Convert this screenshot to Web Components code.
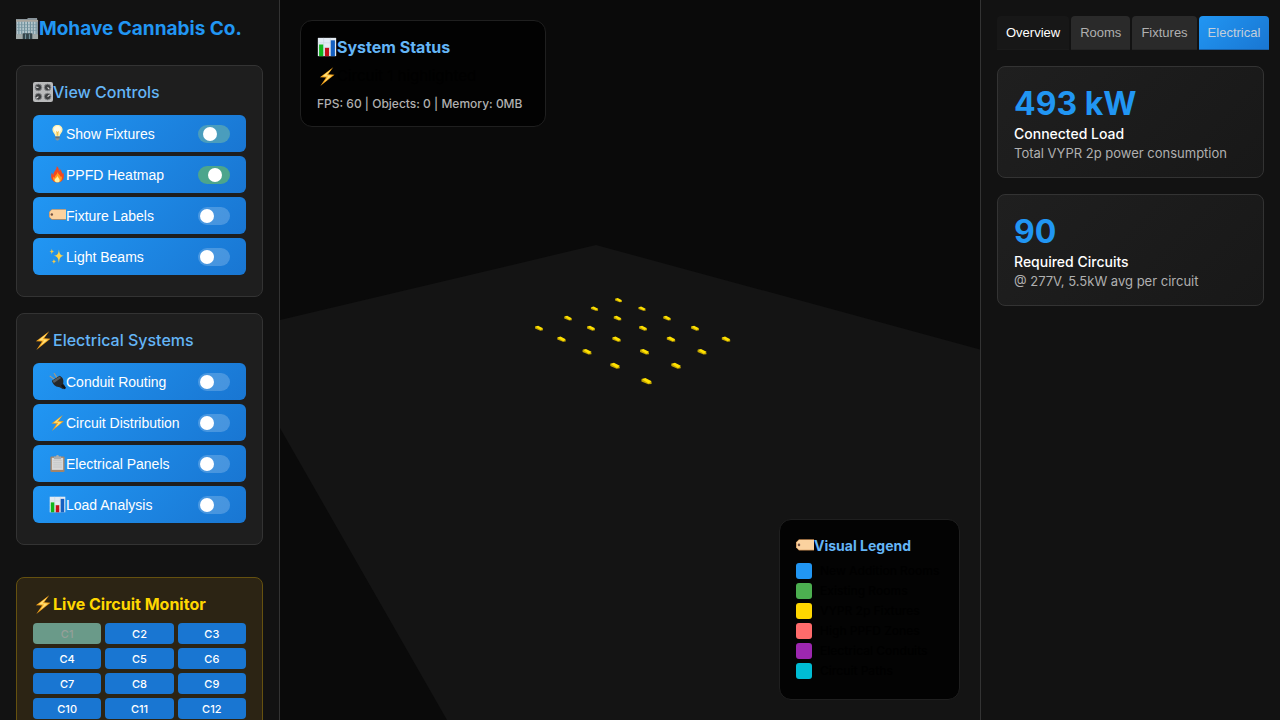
<!DOCTYPE html>
<html lang="en">
<head>
<meta charset="utf-8">
<title>Mohave Cannabis Co.</title>
<style>
  body { margin: 0; background: #0a0a0a; color: #000; font-family: Inter, "Liberation Sans", sans-serif; }
</style>
</head>
<body>
<facility-app></facility-app>
<script>
const define = (name, html, setup) => {
  const template = document.createElement('template');
  template.innerHTML = html;
  customElements.define(name, class extends HTMLElement {
    connectedCallback() {
      if (this.shadowRoot) return;
      const root = this.attachShadow({ mode: 'open' });
      root.append(template.content.cloneNode(true));
      if (setup) setup(this, root);
    }
  });
};

const bolt = '<path d="M19.500 1.500 3.500 13.400l7.400.4L4 24 21 10.400l-7.600-.5z" fill="#f7a51b"/><path d="M17.400 3.600 6.600 12.200l6.600.3-4.600 7L18 11.400l-6.800-.3z" fill="#ffe27a"/>';
const ICONS = {
  building: '<path d="M0 2h12V1h10v3h1v19H0z" fill="#87939a"/><path d="M0 3h23v2H0z" fill="#a9a59c"/><path d="M1 5h21v13H1z" fill="#b5c6cc"/><path d="M3 5v13M6 5v13M9 5v13M12 5v13M15 5v13M18 5v13M21 5v13" stroke="#668a98" stroke-width="1"/><path d="M1 8h21M1 11h21M1 14h21" stroke="#76949f" stroke-width=".7"/><path d="M0 18h23v5H0z" fill="#a1aaa9"/><path d="M7 17h10v6H7z" fill="#34454b"/><path d="M10 18v5M14 18v5" stroke="#7b9aa4"/>',
  knobs: '<rect width="24" height="24" rx="2.500" fill="#b9babb"/><g fill="#3d3f41" stroke="#8c8e90"><circle cx="6.500" cy="6.500" r="4"/><circle cx="17.500" cy="6.500" r="4"/><circle cx="6.500" cy="17.500" r="4"/><circle cx="17.500" cy="17.500" r="4"/></g><path d="M6.500 6.500 3.500 6M17.500 6.500l2 2M6.500 17.500l-2.500 2M17.500 17.500l2.500-2" stroke="#e4e4e4" stroke-width="1.300"/>',
  bulb: '<path d="M12 0c-4.500 0-7.200 3-7.200 6.800 0 4 3.600 5.500 4.200 9.200h6c.6-3.700 4.200-5.200 4.200-9.200C19.200 3 16.500 0 12 0z" fill="#fff0b0"/><path d="M12 1.500c-3 0-5 2-5 5 0 2 1.500 3 2.500 5l2.500 3 2.500-3c1-2 2.500-3 2.500-5 0-3-2-5-5-5z" fill="#fffce9"/><path d="M10 8l2 2 2-2-1 7h-2z" fill="#f5c34d"/><path d="M9 16h6v4l-2 2h-2l-2-2z" fill="#899398"/><path d="M9 18h6" stroke="#46535b"/>',
  fire: '<path d="M11 0c3 3 3 5 3 8 1-1 1.500-2 1-4 4 4 3 6 4 7l1-2c3 8-1 14-8 14S1 17 4 9l2 4C6 8 11 6 11 0z" fill="#f4491f"/><path d="M12 8c1 4 4 5 5 8l1-2c1 6-2 9-6 9s-7-3-6-8l2 2c0-4 4-5 4-9z" fill="#ff9c21"/><path d="M12 14c1 3 3 3 3 6 0 2-1 3-3 3s-4-1-4-3c0-3 3-3 4-6z" fill="#fff0a0"/>',
  tag: '<path d="M4 3h20v15H4l-4-4V7z" fill="#c98e55"/><path d="M4 4h20v13H4l-3-3V7z" fill="#fbd29f"/><circle cx="4" cy="10.500" r="1.700" fill="#765241"/>',
  sparkles: '<path d="M14 2c1 7 2 8 7 9-5 1-6 3-7 10-1-7-2-9-7-10 5-1 6-2 7-9z" fill="#ffd54a"/><path d="M4 1c.5 3 1 3.500 3.500 4C5 5.500 4.500 6 4 9 3.500 6 3 5.500.5 5 3 4.500 3.500 4 4 1zM7 15c.4 3 1 3.500 3.500 4C8 19.500 7.400 20 7 23c-.4-3-1-3.500-3.500-4C6 18.500 6.600 18 7 15z" fill="#f5ca48"/>',
  bolt,
  plug: '<path d="M1 4l8 6M7 0l5 8" stroke="#a59a83" stroke-width="1.600"/><path d="M4 11 15 4c5 2 6 7 5 11l3 4-3 4-5-3c-4 0-9-2-11-9z" fill="#25282a"/><path d="M5 11 15 5l2 2-10 7z" fill="#565c60"/><path d="M18 17l5 5" stroke="#111" stroke-width="3"/>',
  clipboard: '<rect x="2" y="2" width="20" height="22" rx="1.500" fill="#a2846a"/><path d="M4 4h16v17H4z" fill="#d8d9d9"/><path d="M6 8h12M6 11h12M6 14h12M6 17h12" stroke="#bcbfc0"/><path d="M7 2h3a2 2 0 0 1 4 0h3v4H7z" fill="#a9adb0"/>',
  chart: '<path d="M1 1h22v22H1z" fill="#e3ebf3"/><path d="M1 7h22M1 13h22M1 19h22M8 1v22M16 1v22" stroke="#c3d0dc" stroke-width=".6"/><path d="M2.500 9h5v14h-5z" fill="#10b51b"/><path d="M9.500 13h5v10h-5z" fill="#c30e18"/><path d="M16.500 4h5v19h-5z" fill="#145fc1"/>'
};
define('emoji-icon', `<style>
  :host { display: block; flex: none; width: 20px; height: 20px; }
  svg { display: block; width: 100%; height: 100%; }
</style><svg viewBox="0 0 24 24" fill="none" aria-hidden="true"></svg>`,
(el, root) => { root.querySelector('svg').innerHTML = ICONS[el.getAttribute('name')]; });

define('toggle-button', `<style>
  :host { display: block; }
  button { display: flex; align-items: center; width: 100%; height: 37px; padding: 0 16px; border: 0; border-radius: 6px;
    background: linear-gradient(135deg, #2196f3, #1976d2); color: #fff; font: 500 14px/16px "Liberation Sans", Arial, sans-serif; cursor: pointer; }
  emoji-icon { width: 17px; height: 17px; }
  .switch { display: flex; align-items: center; box-sizing: border-box; width: 32px; height: 18px; margin-left: auto; padding: 0 2px;
    border-radius: 9px; background: rgba(255,255,255,.2); }
  .switch::before { content: ""; width: 14px; height: 14px; border-radius: 50%; background: #fff; }
  :host([state="warming"]) .switch { background: #4a9dbd; padding-left: 5px; }
  :host([state="on"]) .switch { background: #4ca58c; padding-left: 10px; }
</style><button type="button"><emoji-icon></emoji-icon><span><slot></slot></span><span class="switch"></span></button>`,
(el, root) => {
  const icon = document.createElement('emoji-icon');
  icon.setAttribute('name', el.getAttribute('icon'));
  root.querySelector('emoji-icon').replaceWith(icon);
  root.querySelector('button').setAttribute('aria-pressed', String(el.hasAttribute('state')));
});

define('control-section', `<style>
  :host { display: block; padding: 16px 16px 21px; border: 1px solid #333; border-radius: 8px; background: #1e1e1e; }
  h3 { display: flex; align-items: center; height: 20px; margin: 0 0 13px; color: #64b5f6; font-size: 16px; line-height: 20px; font-weight: 500; }
  .list { display: grid; gap: 4px; }
</style><h3><slot name="title"></slot></h3><div class="list"><slot></slot></div>`);

define('circuit-monitor', `<style>
  :host { display: block; padding: 16px; border: 1px solid #65510f; border-radius: 8px; background: #2c2414; }
  h3 { display: flex; align-items: center; margin: 0 0 9px; color: #ffd700; font-size: 16px; line-height: 20px; font-weight: 700; }
  .grid { display: grid; grid-template-columns: repeat(3, 1fr); gap: 4px; }
  button { height: 21px; padding: 0; border: 0; border-radius: 4px; background: #1976d2; color: #fff; font: 500 11px/14px Inter, sans-serif; cursor: pointer; }
  button.active { background: #6a9a89; color: #95a099; }
</style><h3><emoji-icon name="bolt"></emoji-icon>Live Circuit Monitor</h3><div class="grid"></div>`,
(el, root) => {
  root.querySelector('.grid').innerHTML = Array.from({ length: 12 }, (_, i) =>
    `<button type="button"${i ? '' : ' class="active"'}>C${i + 1}</button>`).join('');
});

define('side-bar', `<style>
  :host { display: block; box-sizing: border-box; height: 100vh; overflow: hidden; padding: 16px; border-right: 1px solid #333; background: #121212; }
  h1 { display: flex; align-items: center; margin: 0 0 24px; color: #2196f3; font-size: 19px; line-height: 25px; font-weight: 700; white-space: nowrap; }
  h1 emoji-icon { width: 23px; height: 23px; }
  control-section { margin-bottom: 16px; }
  circuit-monitor { margin-top: 32px; }
</style>
<h1><emoji-icon name="building"></emoji-icon>Mohave Cannabis Co.</h1>
<control-section>
  <emoji-icon slot="title" name="knobs"></emoji-icon><span slot="title">View Controls</span>
  <toggle-button icon="bulb" state="warming">Show Fixtures</toggle-button>
  <toggle-button icon="fire" state="on">PPFD Heatmap</toggle-button>
  <toggle-button icon="tag">Fixture Labels</toggle-button>
  <toggle-button icon="sparkles">Light Beams</toggle-button>
</control-section>
<control-section>
  <emoji-icon slot="title" name="bolt"></emoji-icon><span slot="title">Electrical Systems</span>
  <toggle-button icon="plug">Conduit Routing</toggle-button>
  <toggle-button icon="bolt">Circuit Distribution</toggle-button>
  <toggle-button icon="clipboard">Electrical Panels</toggle-button>
  <toggle-button icon="chart">Load Analysis</toggle-button>
</control-section>
<circuit-monitor></circuit-monitor>`);

define('floor-view', `<style>
  :host { display: block; }
  svg { display: block; width: 100%; height: 100%; }
</style><svg viewBox="280 0 700 720" preserveAspectRatio="xMidYMid slice" role="img" aria-label="Facility floor with light fixtures">
  <path d="M596 245 1100 382V720H447L280 428V320z" fill="#141414"/><g class="fixtures"></g></svg>`,
(el, root) => {
  const points = [[618.5,300],[594.5,308.500],[642,308.500],[568,318],[617.5,318],[667,318],[539,328],[591,328],[643,328],[695,328],
    [561.5,339],[616.5,339],[671,339],[726,339],[587,351.500],[644.5,351.500],[702,351.500],[615,365.500],[676,365.500],[646.5,381]];
  root.querySelector('.fixtures').innerHTML = points.map(([x, y]) => {
    const s = 0.75 + (y - 300) / 220;
    return `<g transform="translate(${x} ${y}) scale(${s})"><path d="M-4.500-1.600 4.500 1v1.700L1.500 3-4.500.5z" fill="#c4a600"/><path d="M-4.500-1.700-1-2.600 4.600.2 2 2.300z" fill="#ffe100"/></g>`;
  }).join('');
});

define('status-panel', `<style>
  :host { display: block; min-width: 212px; padding: 16px 16px 14px; border: 1px solid #1f1f1f; border-radius: 12px; background: #020202; white-space: nowrap; }
  h3, p { display: flex; align-items: center; margin: 0; }
  h3 { color: #64b5f6; font-size: 16px; line-height: 20px; font-weight: 700; }
  .event { margin: 9px 0; font-size: 15px; line-height: 20px; color: #000; }
  .stats { color: #b0b0b0; font-size: 12px; line-height: 17px; font-weight: 500; }
</style><h3><emoji-icon name="chart"></emoji-icon>System Status</h3>
<p class="event"><emoji-icon name="bolt"></emoji-icon>Circuit 1 highlighted</p>
<p class="stats">FPS: 60 | Objects: 0 | Memory: 0MB</p>`);

define('visual-legend', `<style>
  :host { display: block; min-width: 147px; padding: 17px 16px 20px; border: 1px solid #1f1f1f; border-radius: 12px; background: #030303; white-space: nowrap; }
  h3 { display: flex; align-items: center; margin: 0 0 8px; color: #64b5f6; font-size: 14px; line-height: 18px; font-weight: 700; }
  emoji-icon { width: 18px; height: 18px; }
  ul { display: grid; gap: 4px; margin: 0; padding: 0; list-style: none; }
  li { display: flex; align-items: center; gap: 8px; color: #000; font-size: 12px; line-height: 16px; font-weight: 500; }
  i { width: 16px; height: 16px; border-radius: 3px; background: var(--swatch); }
</style><h3><emoji-icon name="tag"></emoji-icon>Visual Legend</h3>
<ul>
  <li><i style="--swatch:#2196f3"></i>New Addition Rooms</li>
  <li><i style="--swatch:#4caf50"></i>Existing Rooms</li>
  <li><i style="--swatch:#ffd700"></i>VYPR 2p Fixtures</li>
  <li><i style="--swatch:#ff6b6b"></i>High PPFD Zones</li>
  <li><i style="--swatch:#9c27b0"></i>Electrical Conduits</li>
  <li><i style="--swatch:#00bcd4"></i>Circuit Paths</li>
</ul>`);

define('stat-card', `<style>
  :host { display: block; padding: 16px 16px 14px; border: 1px solid #333; border-radius: 8px; background: linear-gradient(135deg, #1f1f1f, #181818); }
  p { margin: 0; }
  .value { color: #2196f3; font-size: 32px; line-height: 41px; font-weight: 700; }
  .label { color: #fff; font-size: 14px; line-height: 20px; font-weight: 500; }
  .note { color: #b0b0b0; font-size: 13px; line-height: 19px; }
</style><p class="value"><slot name="value"></slot></p><p class="label"><slot name="label"></slot></p><p class="note"><slot></slot></p>`);

define('info-panel', `<style>
  :host { display: block; box-sizing: border-box; height: 100vh; overflow: hidden; padding: 16px; border-left: 1px solid #333; background: #121212; }
  nav { display: flex; gap: 2px; margin-bottom: 16px; }
  button { flex: none; height: 34px; padding: 0 9px; border: 0; border-bottom: 1px solid #242424; border-radius: 4px 4px 0 0; background: #2a2a2a; color: #b0b0b0;
    font: 500 13px/16px "Liberation Sans", Arial, sans-serif; cursor: pointer; }
  button.first { background: #171717; border-color: #1a1a1a; color: #fff; }
  button.current { background: linear-gradient(135deg, #2196f3, #1976d2); border-color: #1a60a6; color: #c3cfdb; }
  stat-card { margin-bottom: 16px; }
</style>
<nav><button type="button" class="first">Overview</button><button type="button">Rooms</button><button type="button">Fixtures</button><button type="button" class="current">Electrical</button></nav>
<stat-card><span slot="value">493 kW</span><span slot="label">Connected Load</span>Total VYPR 2p power consumption</stat-card>
<stat-card><span slot="value">90</span><span slot="label">Required Circuits</span>@ 277V, 5.5kW avg per circuit</stat-card>`);

define('facility-app', `<style>
  :host { display: grid; grid-template-columns: 280px 1fr 300px; height: 100vh; overflow: hidden; }
  main { position: relative; min-width: 0; height: 100vh; overflow: hidden; }
  floor-view { height: 100%; }
  status-panel { position: absolute; top: 20px; left: 20px; }
  visual-legend { position: absolute; right: 20px; bottom: 20px; }
</style><side-bar></side-bar><main><floor-view></floor-view><status-panel></status-panel><visual-legend></visual-legend></main><info-panel></info-panel>`);
</script>
</body>
</html>
